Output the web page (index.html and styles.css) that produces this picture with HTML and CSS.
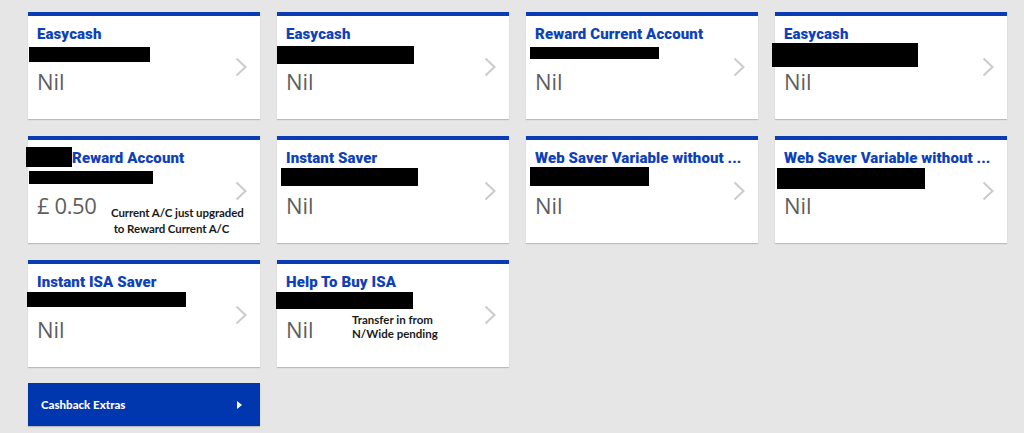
FILE: index.html
```html
<!DOCTYPE html>
<html lang="en">
<head>
<meta charset="utf-8">
<title>Accounts</title>
<link rel="stylesheet" href="styles.css">
</head>
<body>
<main class="page">
  <section class="grid">
    <a class="card">
      <h2 class="title">Easycash</h2>
      <span class="redact r1"></span>
      <p class="value">Nil</p>
      <span class="chev"><svg viewBox="0 0 12 20" width="12" height="20"><path d="M1.5 1.5 L10.5 10 L1.5 18.5" fill="none" stroke="#cbcbcb" stroke-width="2"/></svg></span>
    </a>
    <a class="card">
      <h2 class="title">Easycash</h2>
      <span class="redact r2"></span>
      <p class="value">Nil</p>
      <span class="chev"><svg viewBox="0 0 12 20" width="12" height="20"><path d="M1.5 1.5 L10.5 10 L1.5 18.5" fill="none" stroke="#cbcbcb" stroke-width="2"/></svg></span>
    </a>
    <a class="card">
      <h2 class="title">Reward Current Account</h2>
      <span class="redact r3"></span>
      <p class="value">Nil</p>
      <span class="chev"><svg viewBox="0 0 12 20" width="12" height="20"><path d="M1.5 1.5 L10.5 10 L1.5 18.5" fill="none" stroke="#cbcbcb" stroke-width="2"/></svg></span>
    </a>
    <a class="card">
      <h2 class="title">Easycash</h2>
      <span class="redact r4"></span>
      <p class="value">Nil</p>
      <span class="chev"><svg viewBox="0 0 12 20" width="12" height="20"><path d="M1.5 1.5 L10.5 10 L1.5 18.5" fill="none" stroke="#cbcbcb" stroke-width="2"/></svg></span>
    </a>

    <a class="card">
      <h2 class="title title-indent">Reward Account</h2>
      <span class="redact r5a"></span>
      <span class="redact r5b"></span>
      <p class="value value-amount">£ 0.50</p>
      <p class="note note-a">Current A/C just upgraded<br>&nbsp;to Reward Current A/C</p>
      <span class="chev"><svg viewBox="0 0 12 20" width="12" height="20"><path d="M1.5 1.5 L10.5 10 L1.5 18.5" fill="none" stroke="#cbcbcb" stroke-width="2"/></svg></span>
    </a>
    <a class="card">
      <h2 class="title">Instant Saver</h2>
      <span class="redact r6"></span>
      <p class="value">Nil</p>
      <span class="chev"><svg viewBox="0 0 12 20" width="12" height="20"><path d="M1.5 1.5 L10.5 10 L1.5 18.5" fill="none" stroke="#cbcbcb" stroke-width="2"/></svg></span>
    </a>
    <a class="card">
      <h2 class="title">Web Saver Variable without ...</h2>
      <span class="redact r7"></span>
      <p class="value">Nil</p>
      <span class="chev"><svg viewBox="0 0 12 20" width="12" height="20"><path d="M1.5 1.5 L10.5 10 L1.5 18.5" fill="none" stroke="#cbcbcb" stroke-width="2"/></svg></span>
    </a>
    <a class="card">
      <h2 class="title">Web Saver Variable without ...</h2>
      <span class="redact r8"></span>
      <p class="value">Nil</p>
      <span class="chev"><svg viewBox="0 0 12 20" width="12" height="20"><path d="M1.5 1.5 L10.5 10 L1.5 18.5" fill="none" stroke="#cbcbcb" stroke-width="2"/></svg></span>
    </a>

    <a class="card">
      <h2 class="title">Instant ISA Saver</h2>
      <span class="redact r9"></span>
      <p class="value">Nil</p>
      <span class="chev"><svg viewBox="0 0 12 20" width="12" height="20"><path d="M1.5 1.5 L10.5 10 L1.5 18.5" fill="none" stroke="#cbcbcb" stroke-width="2"/></svg></span>
    </a>
    <a class="card">
      <h2 class="title">Help To Buy ISA</h2>
      <span class="redact r10"></span>
      <p class="value">Nil</p>
      <p class="note note-b">Transfer in from<br>N/Wide pending</p>
      <span class="chev"><svg viewBox="0 0 12 20" width="12" height="20"><path d="M1.5 1.5 L10.5 10 L1.5 18.5" fill="none" stroke="#cbcbcb" stroke-width="2"/></svg></span>
    </a>
  </section>

  <a class="cashback">
    <span class="cashback-label">Cashback Extras</span>
    <svg class="cashback-arrow" viewBox="0 0 5 8" width="5" height="8"><path d="M0 0 L5 4 L0 8 Z" fill="#ffffff"/></svg>
  </a>
</main>
</body>
</html>
```

FILE: styles.css
```css
* {
  box-sizing: border-box;
}

html, body {
  margin: 0;
  padding: 0;
}

body {
  background: #e6e6e6;
  font-family: "Open Sans", "Liberation Sans", sans-serif;
  width: 1024px;
  height: 433px;
  overflow: hidden;
}

.page {
  padding: 12px 0 0 28px;
}

.grid {
  display: grid;
  grid-template-columns: repeat(4, 232px);
  grid-auto-rows: 107px;
  column-gap: 17px;
  row-gap: 17px;
}

.card {
  position: relative;
  display: flex;
  flex-direction: column;
  background: #ffffff;
  border-top: 4px solid #0a3db4;
  box-shadow: 0 1px 1px rgba(0, 0, 0, 0.18);
  padding: 10px 9px 0 9px;
  text-decoration: none;
}

.title {
  margin: 0;
  font-family: "Roboto", "Liberation Sans", sans-serif;
  font-weight: 900;
  font-size: 15px;
  line-height: 16px;
  color: #0e41b8;
  letter-spacing: 0.1px;
  white-space: nowrap;
}

.title-indent {
  padding-left: 35px;
}

.value {
  margin: 26px 0 0 0;
  font-family: "Open Sans", "Liberation Sans", sans-serif;
  font-weight: 400;
  font-size: 22px;
  line-height: 26px;
  color: #5e5e5e;
}

.value-amount {
  letter-spacing: -0.4px;
}

.chev {
  position: absolute;
  right: 13px;
  top: 41px;
  width: 12px;
  height: 20px;
  display: block;
}

.chev svg {
  display: block;
}

.redact {
  position: absolute;
  background: #000000;
  display: block;
}

.r1 { left: 1px; top: 31px; width: 121px; height: 15px; }
.r2 { left: 0; top: 30px; width: 137px; height: 18px; }
.r3 { left: 4px; top: 31px; width: 129px; height: 12px; }
.r4 { left: -3px; top: 27px; width: 146px; height: 24px; }
.r5a { left: -2px; top: 7px; width: 46px; height: 20px; }
.r5b { left: 1px; top: 31px; width: 124px; height: 13px; }
.r6 { left: 4px; top: 28px; width: 137px; height: 18px; }
.r7 { left: 4px; top: 27px; width: 119px; height: 19px; }
.r8 { left: 2px; top: 28px; width: 148px; height: 21px; }
.r9 { left: -1px; top: 28px; width: 159px; height: 15px; }
.r10 { left: -1px; top: 28px; width: 137px; height: 17px; }

.note {
  position: absolute;
  margin: 0;
  font-family: "Lato", "Open Sans", sans-serif;
  font-weight: 700;
  color: #1a1a1a;
  white-space: nowrap;
}

.note-a {
  left: 83px;
  top: 65px;
  font-size: 11.5px;
  line-height: 16px;
  letter-spacing: -0.1px;
}

.note-b {
  left: 75px;
  top: 49px;
  font-size: 11.5px;
  line-height: 14px;
}

.cashback {
  display: flex;
  align-items: center;
  justify-content: space-between;
  width: 232px;
  height: 43px;
  margin-top: 16px;
  padding: 0 18px 0 13px;
  background: #0036ae;
  box-shadow: 0 1px 1px rgba(0, 0, 0, 0.18);
  text-decoration: none;
}

.cashback-label {
  font-family: "Lato", "Open Sans", sans-serif;
  font-weight: 900;
  font-size: 11.5px;
  color: #ffffff;
}

.cashback-arrow {
  display: block;
}
```
